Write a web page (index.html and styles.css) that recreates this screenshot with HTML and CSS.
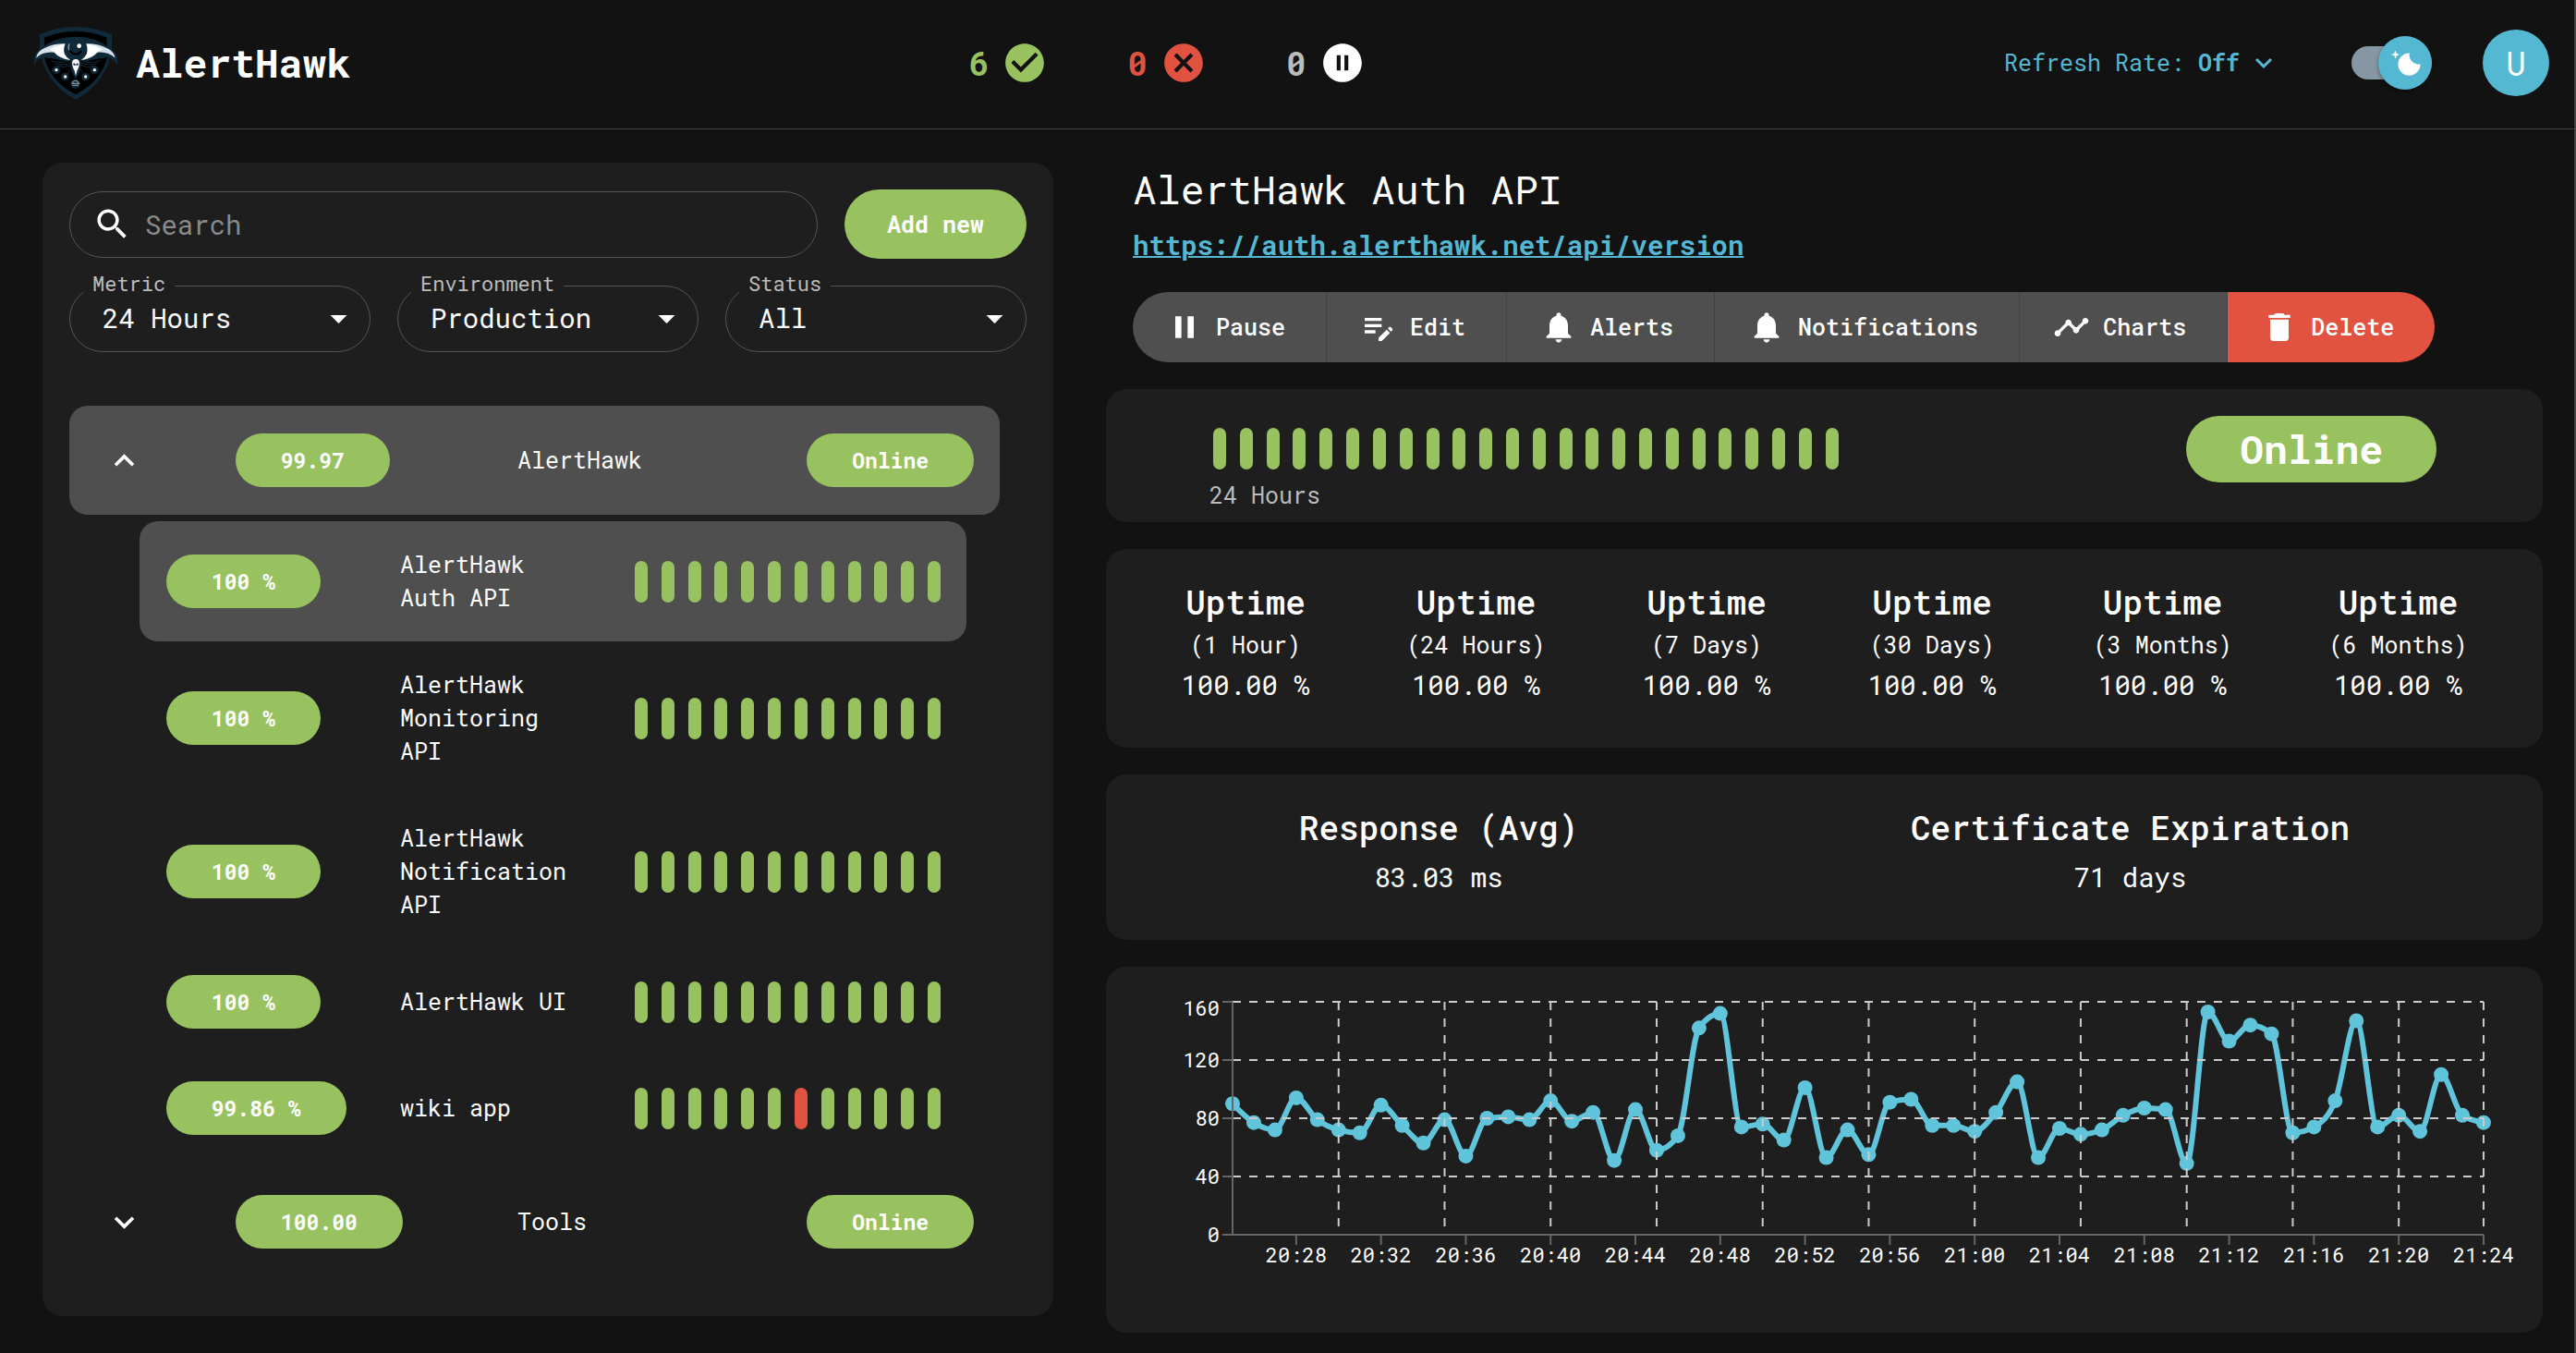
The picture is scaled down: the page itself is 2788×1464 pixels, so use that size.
FILE: index.html
```html
<!DOCTYPE html>
<html lang="en">
<head>
<meta charset="utf-8">
<title>AlertHawk</title>
<link rel="stylesheet" href="styles.css">
</head>
<body>
<svg class="sprite" aria-hidden="true">
  <symbol id="i-check" viewBox="0 0 24 24"><path d="M12 2C6.48 2 2 6.48 2 12s4.48 10 10 10 10-4.48 10-10S17.52 2 12 2m-2 15-5-5 1.41-1.41L10 14.17l7.59-7.59L19 8z"/></symbol>
  <symbol id="i-cancel" viewBox="0 0 24 24"><path d="M12 2C6.47 2 2 6.47 2 12s4.47 10 10 10 10-4.47 10-10S17.53 2 12 2m5 13.59L15.59 17 12 13.41 8.41 17 7 15.59 10.59 12 7 8.41 8.41 7 12 10.59 15.59 7 17 8.41 13.41 12z"/></symbol>
  <symbol id="i-paused" viewBox="0 0 24 24"><path d="M12 2C6.48 2 2 6.48 2 12s4.48 10 10 10 10-4.48 10-10S17.52 2 12 2m-1 14H9V8h2zm4 0h-2V8h2z"/></symbol>
  <symbol id="i-down" viewBox="0 0 24 24"><path d="M16.59 8.59 12 13.17 7.41 8.59 6 10l6 6 6-6z"/></symbol>
  <symbol id="i-up" viewBox="0 0 24 24"><path d="m12 8-6 6 1.41 1.41L12 10.83l4.59 4.58L18 14z"/></symbol>
  <symbol id="i-arrow" viewBox="0 0 24 24"><path d="m7 10 5 5 5-5z"/></symbol>
  <symbol id="i-moon" viewBox="0 0 20 20"><path d="M4.2 2.5l-.7 1.8-1.8.7 1.8.7.7 1.8.6-1.8L6.7 5l-1.9-.7-.6-1.8zm15 8.3a6.7 6.7 0 11-6.6-6.6 5.8 5.8 0 006.6 6.6z"/></symbol>
  <symbol id="i-search" viewBox="0 0 24 24"><path d="M15.5 14h-.79l-.28-.27C15.41 12.59 16 11.11 16 9.5 16 5.91 13.09 3 9.5 3S3 5.91 3 9.5 5.91 16 9.5 16c1.61 0 3.09-.59 4.23-1.57l.27.28v.79l5 4.99L20.49 19zm-6 0C7.01 14 5 11.99 5 9.5S7.01 5 9.5 5 14 7.01 14 9.5 11.99 14 9.5 14"/></symbol>
  <symbol id="i-pause" viewBox="0 0 24 24"><path d="M6 19h4V5H6zm8-14v14h4V5z"/></symbol>
  <symbol id="i-edit" viewBox="0 0 24 24"><path d="M3 10h11v2H3zm0-2h11V6H3zm0 8h7v-2H3zm15.01-3.13.71-.71c.39-.39 1.02-.39 1.41 0l.71.71c.39.39.39 1.02 0 1.41l-.71.71zm-.71.71-5.3 5.3V21h2.12l5.3-5.3z"/></symbol>
  <symbol id="i-bell" viewBox="0 0 24 24"><path d="M12 22c1.1 0 2-.9 2-2h-4c0 1.1.89 2 2 2m6-6v-5c0-3.07-1.64-5.64-4.5-6.32V4c0-.83-.67-1.5-1.5-1.5s-1.5.67-1.5 1.5v.68C7.63 5.36 6 7.92 6 11v5l-2 2v1h16v-1z"/></symbol>
  <symbol id="i-chart" viewBox="0 0 24 24"><path d="M23 8c0 1.1-.9 2-2 2-.18 0-.35-.02-.51-.07l-3.56 3.55c.05.16.07.34.07.52 0 1.1-.9 2-2 2s-2-.9-2-2c0-.18.02-.36.07-.52l-2.55-2.55c-.16.05-.34.07-.52.07s-.36-.02-.52-.07l-4.55 4.56c.05.16.07.33.07.51 0 1.1-.9 2-2 2s-2-.9-2-2 .9-2 2-2c.18 0 .35.02.51.07l4.56-4.55C8.02 9.36 8 9.18 8 9c0-1.1.9-2 2-2s2 .9 2 2c0 .18-.02.36-.07.52l2.55 2.55c.16-.05.34-.07.52-.07s.36.02.52.07l3.55-3.56C19.02 8.35 19 8.18 19 8c0-1.1.9-2 2-2s2 .9 2 2"/></symbol>
  <symbol id="i-delete" viewBox="0 0 24 24"><path d="M6 19c0 1.1.9 2 2 2h8c1.1 0 2-.9 2-2V7H6zM19 4h-3.5l-1-1h-5l-1 1H5v2h14z"/></symbol>
</svg>

<header class="topbar">
  <div class="brand">
    <svg class="logo" viewBox="108 84 276 240" role="img" aria-label="AlertHawk logo">
      <path fill="#102a3a" d="M129 112Q245 62 363 112V165L352 205Q320 285 246 323Q172 285 139 205L129 165Z"/>
      <path fill="#000" d="M144 122Q245 80 347 122V160H144Z"/>
      <path fill="#000" d="M143 182H350Q330 262 246 307Q160 262 143 182Z"/>
      <path fill="#102a3a" d="M111 212Q104 172 136 155Q180 119 246 119Q310 119 355 155Q388 172 380 212Q372 192 352 186Q320 190 300 194Q268 200 246 196Q222 200 192 194Q172 190 140 186Q120 192 111 212Z"/>
      <path fill="#d4e0e8" d="M117 188Q121 165 146 155Q176 141 212 142Q204 160 210 176Q217 188 228 195Q192 190 176 170Q140 166 117 188Z"/>
      <path fill="#fff" d="M160 160Q190 143 211 143Q203 162 210 177Q215 187 227 194Q194 188 176 169Z"/>
      <path fill="#d4e0e8" d="M374 188Q370 165 345 155Q315 141 280 142Q287 160 281 176Q275 188 264 195Q300 190 316 170Q350 166 374 188Z"/>
      <path fill="#fff" d="M332 160Q302 143 281 143Q288 162 281 177Q276 187 265 194Q298 188 316 169Z"/>
      <path fill="none" stroke="#000" stroke-width="7" d="M228 164A20 20 0 0 0 264 164"/>
      <path fill="none" stroke="#8fa5b2" stroke-width="4" d="M225 142Q220 152 224 162"/>
      <circle cx="257" cy="149" r="7" fill="#fff"/>
      <path fill="#102a3a" d="M228 206Q230 188 246 188Q262 188 264 206Q262 236 246 256Q230 236 228 206Z"/>
      <path fill="#fff" d="M234 204Q235 192 246 192Q257 192 258 204Q256 222 250 230L246 246L242 230Q236 222 234 204Z"/>
      <path fill="#102a3a" d="M239 204l6 4-1 6-6-3zM253 204l-6 4 1 6 6-3z"/>
      <path fill="none" stroke="#102a3a" stroke-width="3" d="M165 196Q195 208 222 198M176 206Q200 215 226 206M186 214Q210 222 228 212M327 196Q297 208 270 198M316 206Q292 215 266 206M306 214Q282 222 264 212M219 240L232 224M272 240L260 224"/>
      <g fill="#102a3a">
        <circle cx="183" cy="227" r="13"/><circle cx="212" cy="249" r="13"/><circle cx="278" cy="249" r="13"/><circle cx="307" cy="227" r="13"/>
      </g>
      <g fill="#fff">
        <circle cx="183" cy="227" r="5"/><circle cx="212" cy="249" r="5"/><circle cx="278" cy="249" r="5"/><circle cx="307" cy="227" r="5"/>
      </g>
      <circle cx="245" cy="272" r="15" fill="#102a3a"/>
      <path fill="none" stroke="#d4e0e8" stroke-width="2" d="M235 270Q236 262 245 262Q254 262 255 270M232 271H258M235 277H255"/>
    </svg>
    <span class="brand-name">AlertHawk</span>
  </div>
  <ul class="counts">
    <li class="count up">6<svg><use href="#i-check"/></svg></li>
    <li class="count down">0<svg><use href="#i-cancel"/></svg></li>
    <li class="count paused">0<svg><use href="#i-paused"/></svg></li>
  </ul>
  <div class="tools">
    <div class="refresh">
      <label for="refresh">Refresh Rate:</label>
      <select id="refresh"><option>Off</option></select>
      <svg><use href="#i-down"/></svg>
    </div>
    <label class="switch">
      <input type="checkbox" checked aria-label="Dark mode">
      <span class="thumb"><svg><use href="#i-moon"/></svg></span>
    </label>
    <button class="avatar" type="button" aria-label="Account">U</button>
  </div>
</header>

<main class="layout">
  <section class="panel">
    <div class="search-row">
      <div class="search">
        <svg><use href="#i-search"/></svg>
        <input type="search" placeholder="Search" aria-label="Search">
      </div>
      <button class="add" type="button">Add new</button>
    </div>
    <div class="filters">
      <div class="field"><label for="metric">Metric</label><select id="metric"><option>24 Hours</option></select><svg><use href="#i-arrow"/></svg></div>
      <div class="field"><label for="env">Environment</label><select id="env"><option>Production</option></select><svg><use href="#i-arrow"/></svg></div>
      <div class="field"><label for="status">Status</label><select id="status"><option>All</option></select><svg><use href="#i-arrow"/></svg></div>
    </div>

    <div class="monitors">
      <div class="group open">
        <button class="toggle" type="button" aria-label="Collapse AlertHawk"><svg><use href="#i-up"/></svg></button>
        <div><span class="pill">99.97</span></div>
        <span>AlertHawk</span>
        <span class="pill">Online</span>
      </div>
      <ul class="children">
        <li class="monitor selected"><div><span class="pill">100 %</span></div><span class="name">AlertHawk Auth API</span><div class="bars"><i></i><i></i><i></i><i></i><i></i><i></i><i></i><i></i><i></i><i></i><i></i><i></i></div></li>
        <li class="monitor"><div><span class="pill">100 %</span></div><span class="name">AlertHawk Monitoring API</span><div class="bars"><i></i><i></i><i></i><i></i><i></i><i></i><i></i><i></i><i></i><i></i><i></i><i></i></div></li>
        <li class="monitor"><div><span class="pill">100 %</span></div><span class="name">AlertHawk Notification API</span><div class="bars"><i></i><i></i><i></i><i></i><i></i><i></i><i></i><i></i><i></i><i></i><i></i><i></i></div></li>
        <li class="monitor"><div><span class="pill">100 %</span></div><span class="name">AlertHawk UI</span><div class="bars"><i></i><i></i><i></i><i></i><i></i><i></i><i></i><i></i><i></i><i></i><i></i><i></i></div></li>
        <li class="monitor"><div><span class="pill">99.86 %</span></div><span class="name">wiki app</span><div class="bars"><i></i><i></i><i></i><i></i><i></i><i></i><i class="fail"></i><i></i><i></i><i></i><i></i><i></i></div></li>
      </ul>
      <div class="group">
        <button class="toggle" type="button" aria-label="Expand Tools"><svg><use href="#i-down"/></svg></button>
        <div><span class="pill">100.00</span></div>
        <span>Tools</span>
        <span class="pill">Online</span>
      </div>
    </div>
  </section>

  <section class="detail">
    <div class="heading">
      <h1>AlertHawk Auth API</h1>
      <a href="https://auth.alerthawk.net/api/version">https://auth.alerthawk.net/api/version</a>
      <div class="actions">
        <button type="button"><svg><use href="#i-pause"/></svg>Pause</button>
        <button type="button"><svg><use href="#i-edit"/></svg>Edit</button>
        <button type="button"><svg><use href="#i-bell"/></svg>Alerts</button>
        <button type="button"><svg><use href="#i-bell"/></svg>Notifications</button>
        <button type="button"><svg><use href="#i-chart"/></svg>Charts</button>
        <button type="button" class="danger"><svg><use href="#i-delete"/></svg>Delete</button>
      </div>
    </div>

    <div class="card history">
      <div class="timeline">
        <div class="bars wide"><i></i><i></i><i></i><i></i><i></i><i></i><i></i><i></i><i></i><i></i><i></i><i></i><i></i><i></i><i></i><i></i><i></i><i></i><i></i><i></i><i></i><i></i><i></i><i></i></div>
        <p>24 Hours</p>
      </div>
      <span class="pill big">Online</span>
    </div>

    <div class="card stats">
      <div class="stat"><h2>Uptime</h2><p>(1 Hour)</p><strong>100.00 %</strong></div>
      <div class="stat"><h2>Uptime</h2><p>(24 Hours)</p><strong>100.00 %</strong></div>
      <div class="stat"><h2>Uptime</h2><p>(7 Days)</p><strong>100.00 %</strong></div>
      <div class="stat"><h2>Uptime</h2><p>(30 Days)</p><strong>100.00 %</strong></div>
      <div class="stat"><h2>Uptime</h2><p>(3 Months)</p><strong>100.00 %</strong></div>
      <div class="stat"><h2>Uptime</h2><p>(6 Months)</p><strong>100.00 %</strong></div>
    </div>

    <div class="card stats">
      <div class="stat"><h2>Response (Avg)</h2><strong>83.03 ms</strong></div>
      <div class="stat"><h2>Certificate Expiration</h2><strong>71 days</strong></div>
    </div>

    <div class="card">
      <svg class="chart" id="chart" viewBox="0 0 1555 396" role="img" aria-label="Response time, last hour"></svg>
    </div>
  </section>
</main>
<script src="chart.js"></script>
</body>
</html>
```

FILE: styles.css
```css
:root {
  --bg: #121212;
  --card: #1e1e1e;
  --row: #4f4f4f;
  --green: #98c25f;
  --red: #e15241;
  --blue: #55b8d2;
  --muted: #bcbcbc;
}

* { box-sizing: border-box; }

body {
  margin: 0;
  min-height: 100vh;
  border-right: 2px solid #424242;
  background: var(--bg);
  color: #fff;
  font: 25px/36px "Roboto Mono", "DejaVu Sans Mono", "Liberation Mono", monospace;
}

h1, h2, p, ul { margin: 0; padding: 0; font-weight: 400; }
ul { list-style: none; }
button, input, select { font: inherit; color: inherit; border: 0; background: none; margin: 0; padding: 0; }
select { appearance: none; }
svg { display: block; flex: none; fill: currentColor; }
.sprite { position: absolute; width: 0; height: 0; }

/* Top bar */
.topbar {
  display: flex;
  align-items: center;
  justify-content: space-between;
  height: 140px;
  padding: 0 27px 4px 36px;
  border-bottom: 1px solid #404040;
}
.brand { display: flex; align-items: center; gap: 19px; }
.logo { width: 92px; height: 80px; }
.brand-name { font-size: 43px; line-height: 60px; font-weight: 700; }
.counts { display: flex; gap: 86px; margin-right: 22px; font-size: 36px; font-weight: 700; }
.count { display: flex; align-items: center; gap: 14px; }
.count svg { width: 50px; height: 50px; }
.count.up { color: var(--green); }
.count.down { color: var(--red); }
.count.paused { color: var(--muted); }
.count.paused svg { color: #fff; }
.tools { display: flex; align-items: center; }
.refresh { display: flex; align-items: center; color: var(--blue); margin-right: 77px; }
.refresh label { margin-right: 15px; }
.refresh select { font-weight: 700; margin-right: 7px; }
.refresh svg { width: 36px; height: 36px; }
.switch { display: grid; align-items: center; width: 87px; margin-right: 55px; }
.switch > * { grid-area: 1 / 1; }
.switch input { appearance: none; height: 36px; border-radius: 18px; background: #8796a5; }
.thumb {
  display: grid;
  place-items: center;
  justify-self: end;
  width: 58px;
  height: 58px;
  border-radius: 50%;
  background: var(--blue);
  box-shadow: 0 2px 4px rgba(0, 0, 0, .4);
}
.thumb svg { width: 36px; height: 36px; }
.avatar { width: 72px; height: 72px; border-radius: 50%; background: var(--blue); font-size: 36px; }

/* Layout */
.layout {
  display: grid;
  grid-template-columns: minmax(0, 413fr) minmax(0, 587fr);
  gap: 57px;
  align-items: start;
  padding: 36px 34px 20px 46px;
}
.panel { padding: 29px 29px 43px; border-radius: 22px; background: var(--card); }

/* Search and filters */
.search-row { display: flex; align-items: center; gap: 29px; margin-bottom: 29px; }
.search {
  display: flex;
  flex: 1;
  align-items: center;
  gap: 14px;
  height: 72px;
  padding: 0 24px;
  border: 1px solid #555;
  border-radius: 36px;
}
.search svg { width: 43px; height: 43px; }
.search input { flex: 1; min-width: 0; font-size: 29px; outline: 0; }
.search input::placeholder { color: #8a8a8a; opacity: 1; }
.add { height: 75px; padding: 0 46px; border-radius: 38px; background: var(--green); font-weight: 700; }
.filters { display: grid; grid-template-columns: repeat(3, 1fr); gap: 29px; margin-bottom: 58px; }
.field { position: relative; }
.field label {
  position: absolute;
  top: -14px;
  left: 15px;
  padding: 0 10px;
  background: var(--card);
  color: var(--muted);
  font-size: 22px;
  line-height: 24px;
}
.field select { width: 100%; height: 72px; padding: 0 60px 3px 35px; border: 1px solid #555; border-radius: 36px; font-size: 29px; }
.field svg { position: absolute; top: 14px; right: 13px; width: 43px; height: 43px; pointer-events: none; }

/* Monitor list */
.monitors { display: grid; gap: 7px; margin-right: 29px; }
.group {
  display: grid;
  grid-template-columns: 151px 305px 1fr auto;
  align-items: center;
  height: 118px;
  padding: 0 28px 0 29px;
  border-radius: 20px;
}
.group.open, .monitor.selected { background: var(--row); }
.toggle { display: grid; place-items: center; width: 60px; height: 60px; }
.toggle svg { width: 43px; height: 43px; }
.pill {
  display: inline-block;
  padding: 0 49px;
  border-radius: 29px;
  background: var(--green);
  font-size: 23px;
  line-height: 58px;
  font-weight: 700;
  white-space: nowrap;
  vertical-align: top;
}
.pill.big { padding: 0 58px; border-radius: 36px; font-size: 43px; line-height: 72px; }
.children { margin: 0 36px 0 76px; }
.monitor {
  display: grid;
  grid-template-columns: 253px 1fr 331px;
  align-items: center;
  padding: 29px 28px 29px 29px;
  border-radius: 20px;
}
.monitor:nth-child(n + 4) { padding-bottom: 28px; }
.name { padding-right: 56px; }
.bars { display: flex; justify-content: space-between; }
.bars i { width: 14px; height: 45px; border-radius: 7px; background: var(--green); }
.bars .fail { background: var(--red); }
.bars.wide { width: 677px; margin: 0 0 10px 4px; }

/* Detail column */
.detail { display: grid; gap: 29px; }
.heading { padding-left: 29px; }
.heading h1 { margin-bottom: 10px; font-size: 43px; line-height: 58px; }
.heading a {
  display: block;
  width: max-content;
  color: var(--blue);
  font-size: 29px;
  line-height: 42px;
  font-weight: 700;
  text-decoration-thickness: 2px;
}
.actions { display: flex; width: max-content; margin-top: 30px; border-radius: 38px; overflow: hidden; }
.actions button {
  display: flex;
  align-items: center;
  gap: 14px;
  height: 76px;
  padding: 0 44px 0 36px;
  background: var(--row);
  font-weight: 500;
}
.actions button + button { border-left: 1px solid #434343; }
.actions .danger { background: var(--red); }
.actions svg { width: 40px; height: 40px; }
.card { border-radius: 22px; background: var(--card); }
.history { display: flex; align-items: flex-start; justify-content: space-between; padding: 29px 115px 11px 112px; }
.timeline { padding-top: 13px; }
.timeline p { color: var(--muted); }
.stats { display: flex; justify-content: space-around; padding: 28px 29px; text-align: center; }
.stat { padding-bottom: 18px; }
.stat h2 { font-size: 36px; line-height: 58px; font-weight: 500; }
.stat strong { display: block; margin-top: 4px; font-size: 29px; line-height: 43px; font-weight: 400; }

/* Chart */
.chart { width: 100%; height: auto; border-radius: 22px; font-size: 22px; }
.chart text { fill: #fff; }
.chart .x { text-anchor: middle; }
.chart .y { text-anchor: end; }
.chart .grid { stroke: #ccc; stroke-width: 2; stroke-dasharray: 9 9; }
.chart .axis { stroke: #666; stroke-width: 2; }
.chart .line { fill: none; stroke: #60c4da; stroke-width: 6; }
.chart .dot { fill: #60c4da; }
```

FILE: chart.js
```js
// Response time in ms, one sample a minute from 20:25 to 21:24.
const values = [
  90, 77, 72, 94, 79, 72, 70, 89, 75, 63, 79, 54, 80, 81, 79, 92, 78, 84, 51, 86,
  58, 68, 142, 152, 74, 76, 65, 101, 53, 72, 55, 91, 93, 75, 75, 71, 84, 105, 53, 73,
  69, 72, 82, 87, 86, 49, 153, 133, 144, 138, 70, 74, 92, 147, 74, 82, 71, 110, 82, 77
];

function drawChart(svg) {
  const left = 137, right = 1491, top = 38, bottom = 290, max = 160;
  const px = i => left + i * (right - left) / (values.length - 1);
  const py = v => bottom - v * (bottom - top) / max;

  function add(name, attrs, text) {
    const node = document.createElementNS('http://www.w3.org/2000/svg', name);
    for (const key in attrs) node.setAttribute(key, attrs[key]);
    if (text !== undefined) node.textContent = text;
    svg.appendChild(node);
  }
  const line = (cls, x1, y1, x2, y2) => add('line', { class: cls, x1, y1, x2, y2 });

  // Monotone cubic interpolation through the samples.
  const pts = values.map((v, i) => [px(i), py(v)]);
  const last = pts.length - 1;
  const step = pts[1][0] - pts[0][0];
  const slopes = pts.slice(1).map((p, i) => (p[1] - pts[i][1]) / step);
  const tangents = pts.map((p, i) => {
    if (i === 0 || i === last) return 0;
    const a = slopes[i - 1], b = slopes[i];
    return (Math.sign(a) + Math.sign(b)) * Math.min(Math.abs(a), Math.abs(b), Math.abs(a + b) / 4);
  });
  tangents[0] = (3 * slopes[0] - tangents[1]) / 2;
  tangents[last] = (3 * slopes[last - 1] - tangents[last - 1]) / 2;
  let d = 'M' + pts[0];
  for (let i = 1; i <= last; i++) {
    const [x0, y0] = pts[i - 1], [x1, y1] = pts[i];
    d += `C${x0 + step / 3},${y0 + tangents[i - 1] * step / 3},${x1 - step / 3},${y1 - tangents[i] * step / 3},${x1},${y1}`;
  }
  add('path', { class: 'line', d });
  pts.forEach(([cx, cy]) => add('circle', { class: 'dot', cx, cy, r: 8 }));

  for (let v = 0; v <= max; v += 40) {
    line('grid', left, py(v), right, py(v));
    line('axis', left - 11, py(v), left, py(v));
    add('text', { class: 'y', x: 123, y: v === max ? top + 15 : py(v) + 8 }, v);
  }
  for (let i = 5; i <= last; i += 5) line('grid', px(i), top, px(i), bottom);
  line('grid', right, top, right, bottom);
  line('axis', left, top, left, bottom);
  line('axis', left, bottom, right, bottom);
  for (let i = 3; i <= last; i += 4) {
    const minute = 25 + i;
    const label = (20 + Math.floor(minute / 60)) + ':' + String(minute % 60).padStart(2, '0');
    line('axis', px(i), bottom, px(i), bottom + 11);
    add('text', { class: 'x', x: px(i), y: 320 }, label);
  }
}

drawChart(document.getElementById('chart'));
```
